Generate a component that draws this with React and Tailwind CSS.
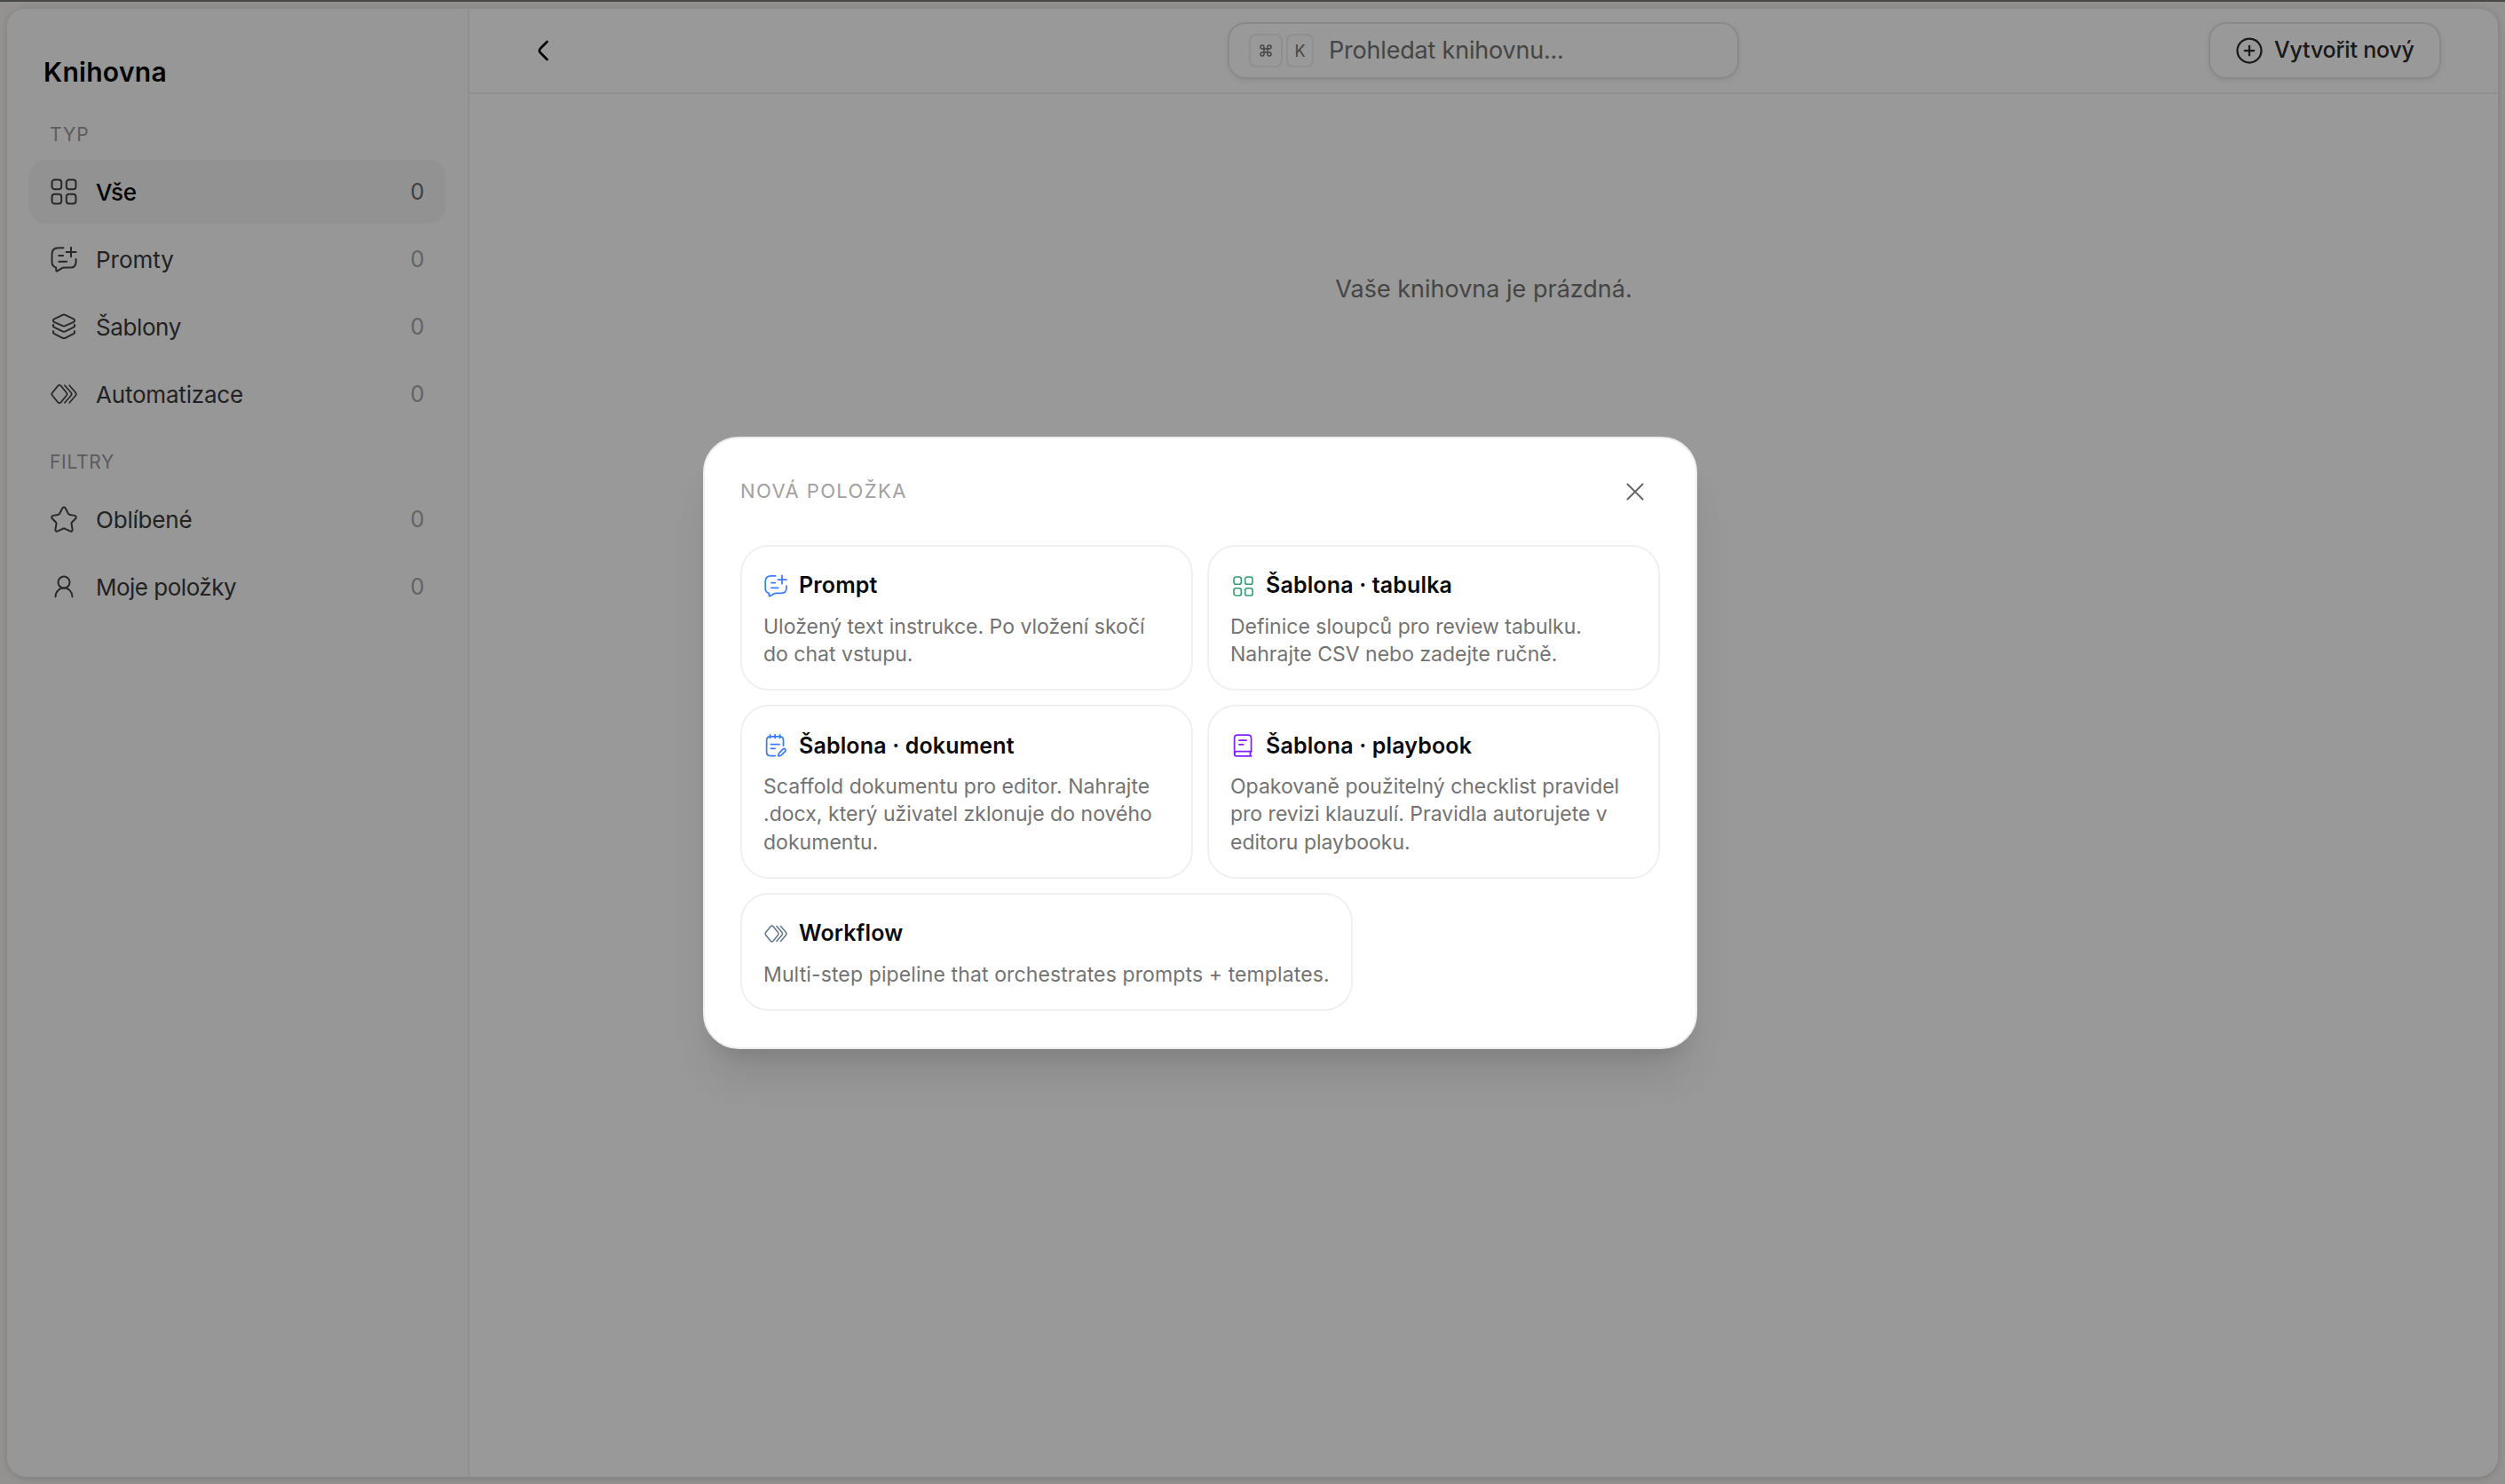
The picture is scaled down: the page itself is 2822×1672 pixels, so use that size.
const Icon = ({ className = "w-8 h-8", strokeWidth = 1.5, children }) => (
  <svg className={className} fill="none" stroke="currentColor" strokeWidth={strokeWidth} strokeLinecap="round" strokeLinejoin="round" viewBox="0 0 24 24">
    {children}
  </svg>
);

const GridIcon = ({ className }) => (
  <Icon className={className}>
    <rect x="1.9" y="1.9" width="8" height="8" rx="2.3" />
    <rect x="14.1" y="1.9" width="8" height="8" rx="2.3" />
    <rect x="1.9" y="14.1" width="8" height="8" rx="2.3" />
    <rect x="14.1" y="14.1" width="8" height="8" rx="2.3" />
  </Icon>
);

const PromptIcon = ({ className }) => (
  <Icon className={className}>
    <path d="M11.6 2.5H7.5C4 2.5 1.9 4.4 1.9 8v6.5c0 2.7 1.3 4 3.5 4.6v2.1c0 .8.6 1.1 1.3.6l3-1.9c.8-.5 1.5-.7 2.5-.7H17c3.5 0 5.2-1.8 5.2-5V12" />
    <path d="M18 2v8M14 6h8.2M7.7 9h3.6M7.7 14h6.6" />
  </Icon>
);

const LayersIcon = ({ className }) => (
  <Icon className={className}>
    <path d="M10.9 2.1 3.8 5.5c-1.1.6-1.1 2.1 0 2.7l7.1 3.1c.7.3 1.5.3 2.2 0l7.1-3.1c1.1-.6 1.1-2.1 0-2.7l-7.1-3.4c-.7-.3-1.5-.3-2.2 0Z" />
    <path d="M3.1 10.4c-.4 1.1 0 1.9.9 2.3l6.9 3.3c.7.3 1.5.3 2.2 0l6.9-3.3c.9-.4 1.3-1.2.9-2.3" />
    <path d="M3.1 15.8c-.4 1.1 0 1.9.9 2.3l6.9 3.5c.7.3 1.5.3 2.2 0l6.9-3.5c.9-.4 1.3-1.2.9-2.3" />
  </Icon>
);

const WorkflowIcon = ({ className }) => (
  <Icon className={className} strokeWidth={1.3}>
    <path d="M7 5 2.3 10.7c-.7.8-.7 1.8 0 2.6L7 19c.8.8 1.6.8 2.4 0l4.7-5.7c.7-.8.7-1.8 0-2.6L9.4 5c-.8-.8-1.6-.8-2.4 0Z" />
    <path d="m12.7 4.7 5.3 6c.7.8.7 1.8 0 2.6l-5.3 6" />
    <path d="m16.7 4.7 5.1 6c.7.8.7 1.8 0 2.6l-5.1 6" />
  </Icon>
);

const StarIcon = ({ className }) => (
  <Icon className={className}>
    <path d="M13.5 3l2.1 4.2c.3.5.8.9 1.4 1l4.1.7c1.3.3 1.7 1.6.8 2.5l-3 3c-.4.4-.6 1-.5 1.6l.8 4.5c.2 1.4-.9 2.2-2.1 1.6L13.1 20.1c-.7-.4-1.5-.4-2.2 0L6.9 22.1c-1.2.6-2.3-.2-2.1-1.6l.8-4.5c.1-.6-.1-1.2-.5-1.6l-3-3c-.9-.9-.5-2.2.8-2.5l4.1-.7c.6-.1 1.1-.5 1.4-1L10.5 3c.6-1.4 2.4-1.4 3 0Z" />
  </Icon>
);

const UserIcon = ({ className }) => (
  <Icon className={className}>
    <circle cx="12" cy="8.3" r="4.9" />
    <path d="M4.9 20.4c0-4.1 3.1-7.2 7.1-7.2s7.1 3.1 7.1 7.2" />
  </Icon>
);

const DocumentIcon = ({ className }) => (
  <Icon className={className}>
    <path d="M19.3 12V7c0-2.5-1.2-3.7-3.7-3.7H6.8C4.3 3.3 3.1 4.5 3.1 7v11.2c0 2.5 1.2 3.7 3.7 3.7h4.5" />
    <path d="M6.5 1.6v3.2M11.2 1.6v3.2M15.9 1.6v3.2M7.2 10.8h8.3M7.2 14.8h4" />
    <path d="M14.4 22.1c-.1-1.4.3-2.3 1.1-3.1l3.5-3.6c1.3-1.2 3.4.8 2.2 2.1l-3.7 3.6c-.8.8-1.7 1.1-3.1 1Z" />
  </Icon>
);

const BookIcon = ({ className }) => (
  <Icon className={className}>
    <path d="M20.2 17.7V4.8c0-1.9-1-2.9-2.9-2.9H6.9C5 1.9 4 2.9 4 4.8v15" />
    <path d="M20.2 17.7H6.2c-1.3 0-2.2.9-2.2 2.2 0 1.4.9 2.3 2.2 2.3h14c-1.5-1.3-1.5-3.2 0-4.5ZM8.5 6.9h7M8.5 11.1h4" />
  </Icon>
);

const types = [
  { label: "Vše", icon: GridIcon, active: true, tracking: "tracking-[-0.2px]" },
  { label: "Promty", icon: PromptIcon, tracking: "tracking-normal" },
  { label: "Šablony", icon: LayersIcon, tracking: "tracking-[-0.4px]" },
  { label: "Automatizace", icon: WorkflowIcon, tracking: "tracking-[-0.2px]" },
];

const filters = [
  { label: "Oblíbené", icon: StarIcon, tracking: "tracking-[-0.2px]" },
  { label: "Moje položky", icon: UserIcon, tracking: "tracking-[-0.5px]" },
];

const cards = [
  {
    title: "Prompt",
    icon: PromptIcon,
    color: "text-[#3b7bff]",
    size: "w-7 h-7",
    tracking: "tracking-normal",
    text: ["Uložený text instrukce. Po vložení skočí", "do chat vstupu."],
  },
  {
    title: "Šablona · tabulka",
    icon: GridIcon,
    color: "text-[#2f9e6e]",
    size: "w-[25px] h-[25px]",
    tracking: "tracking-normal",
    text: ["Definice sloupců pro review tabulku.", "Nahrajte CSV nebo zadejte ručně."],
  },
  {
    title: "Šablona · dokument",
    icon: DocumentIcon,
    color: "text-[#3b7bff]",
    size: "w-7 h-7",
    tracking: "tracking-[0.03px]",
    text: ["Scaffold dokumentu pro editor. Nahrajte", ".docx, který uživatel zklonuje do nového", "dokumentu."],
  },
  {
    title: "Šablona · playbook",
    icon: BookIcon,
    color: "text-[#7f22fe]",
    size: "w-7 h-7",
    tracking: "tracking-normal",
    text: ["Opakovaně použitelný checklist pravidel", "pro revizi klauzulí. Pravidla autorujete v", "editoru playbooku."],
  },
];

const workflow = {
  title: "Workflow",
  icon: WorkflowIcon,
  color: "text-[#62748e]",
  size: "w-7 h-7",
  tracking: "tracking-[0.12px]",
  text: ["Multi-step pipeline that orchestrates prompts + templates."],
};

const SidebarItem = ({ item }) => {
  const ItemIcon = item.icon;
  return (
    <button className={`flex items-center h-[72px] px-6 rounded-[20px] text-left ${item.active ? "bg-[#f3f3f3] text-black font-medium" : "text-[#393939]"}`}>
      <ItemIcon className="w-8 h-8 shrink-0 text-[#444444]" />
      <span className={`ml-5 pt-px flex-1 text-[26px] leading-[36px] ${item.tracking}`}>{item.label}</span>
      <span className={`pt-px text-[25px] font-normal ${item.active ? "text-[#6b6b6b]" : "text-[#a5a5a5]"}`}>0</span>
    </button>
  );
};

const Card = ({ card }) => {
  const CardIcon = card.icon;
  return (
    <button className="flex flex-col px-6 pt-[26px] pb-[23px] border-2 border-[#f0f0f0] rounded-[32px] text-left">
      <div className="flex items-center h-9 gap-3">
        <span className={`flex items-center justify-center w-7 h-7 ${card.color}`}>
          <CardIcon className={card.size} />
        </span>
        <h3 className="text-[25px] font-semibold tracking-[0.15px] text-[#0a0a0a] whitespace-nowrap">{card.title}</h3>
      </div>
      <p className={`mt-[12.5px] text-[23px] leading-[31.4px] text-[#737373] ${card.tracking}`}>
        {card.text.map((line) => (
          <span key={line} className="block whitespace-nowrap">{line}</span>
        ))}
      </p>
    </button>
  );
};

export default function App() {
  return (
    <div className="relative w-full h-[1672px] overflow-hidden bg-[#f6f4f1] font-['Inter',sans-serif]">
      <div className="flex flex-col h-full border-t-2 border-[#757970] pt-1.5 pb-2 pl-2 pr-2">
        <div className="flex flex-1 rounded-[22px] bg-white border-t-2 border-[#e9e9e9] shadow-[0_2px_8px_rgba(0,0,0,0.14)] overflow-hidden">
          {/* Sidebar */}
          <aside className="flex flex-col w-[521px] shrink-0 px-6 pr-[25px] bg-[#fcfcfc] border-r-2 border-[#efefef]">
            <h1 className="mt-[51px] pl-[17px] h-10 text-[30px] leading-10 tracking-[0.3px] font-semibold text-black">Knihovna</h1>
            <div className="mt-[33px] pl-6 h-9 leading-9 text-[21px] tracking-[1px] text-[#999999]">TYP</div>
            <nav className="mt-[10px] flex flex-col gap-1">
              {types.map((item) => (
                <SidebarItem key={item.label} item={item} />
              ))}
            </nav>
            <div className="mt-[23px] pl-6 h-9 leading-9 text-[21px] tracking-[0.7px] text-[#999999]">FILTRY</div>
            <nav className="mt-[10px] flex flex-col gap-1">
              {filters.map((item) => (
                <SidebarItem key={item.label} item={item} />
              ))}
            </nav>
          </aside>

          {/* Main content */}
          <main className="flex flex-col flex-1">
            <header className="grid grid-cols-[1fr_576px_1fr] items-center h-24 pl-[63px] pr-16 border-b-2 border-[#efefef]">
              <button className="ml-[3px] w-8 h-8 text-black">
                <svg className="w-8 h-8" fill="none" stroke="currentColor" strokeWidth={2} strokeLinecap="round" strokeLinejoin="round" viewBox="0 0 24 24">
                  <path d="m16 4.5-5.8 5.8c-.9.9-.9 2.5 0 3.4L16 19.5" />
                </svg>
              </button>
              <div className="flex items-center h-16 px-[22px] border-2 border-[#e5e5e5] rounded-[20px] shadow-[0_2px_6px_rgba(0,0,0,0.08)]">
                <kbd className="flex items-center justify-center w-[38px] h-[38px] border-2 border-[#eeeeee] rounded-lg text-[#737373]">
                  <svg className="w-4 h-4" fill="none" stroke="currentColor" strokeWidth={2.2} viewBox="0 0 24 24">
                    <path d="M15 6v12a3 3 0 1 0 3-3H6a3 3 0 1 0 3 3V6a3 3 0 1 0-3 3h12a3 3 0 1 0-3-3" />
                  </svg>
                </kbd>
                <kbd className="ml-1 flex items-center justify-center w-[31px] h-[38px] border-2 border-[#eeeeee] rounded-lg text-[18px] font-['Inter',sans-serif] text-[#737373]">K</kbd>
                <span className="ml-[17px] pt-px text-[27px] tracking-[-0.2px] text-[#737373]">Prohledat knihovnu...</span>
              </div>
              <button className="justify-self-end flex items-center h-16 w-[262px] pl-[26px] border-2 border-[#e5e5e5] rounded-[20px] shadow-[0_2px_6px_rgba(0,0,0,0.08)] text-[#2b2b2b]">
                <svg className="w-9 h-9" fill="none" stroke="currentColor" strokeWidth={1.5} strokeLinecap="round" viewBox="0 0 24 24">
                  <circle cx="12" cy="12" r="9" />
                  <path d="M12 8.5v7M8.5 12h7" />
                </svg>
                <span className="ml-[10px] text-[25px] font-medium tracking-[-0.2px] whitespace-nowrap">Vytvořit nový</span>
              </button>
            </header>
            <p className="mt-[200px] text-center text-[27px] leading-10 text-[#737373]">Vaše knihovna je prázdná.</p>
          </main>
        </div>
      </div>

      {/* Modal */}
      <div className="absolute inset-0 bg-black/40">
        <div className="absolute left-[792px] top-[492px] w-[1120px] h-[690px] px-10 pt-10 border-2 border-[#eeeeee] rounded-[40px] bg-white shadow-[0_40px_50px_-10px_rgba(0,0,0,0.1),0_16px_20px_-12px_rgba(0,0,0,0.1)]">
          <div className="flex items-center justify-between h-10 pr-[10px]">
            <h2 className="text-[22px] leading-8 pb-0.5 tracking-[1.4px] text-[#a1a1a1]">NOVÁ POLOŽKA</h2>
            <button className="flex items-center justify-center w-9 h-9 text-[#666666]">
              <svg className="w-9 h-9" fill="none" stroke="currentColor" strokeWidth={1.3} strokeLinecap="round" viewBox="0 0 24 24">
                <path d="m6.3 6.3 11.4 11.4M17.7 6.3 6.3 17.7" />
              </svg>
            </button>
          </div>
          <div className="mt-10 grid grid-cols-2 gap-4">
            {cards.map((card) => (
              <Card key={card.title} card={card} />
            ))}
          </div>
          <div className="mt-4 flex">
            <Card card={workflow} />
          </div>
        </div>
      </div>
    </div>
  );
}
